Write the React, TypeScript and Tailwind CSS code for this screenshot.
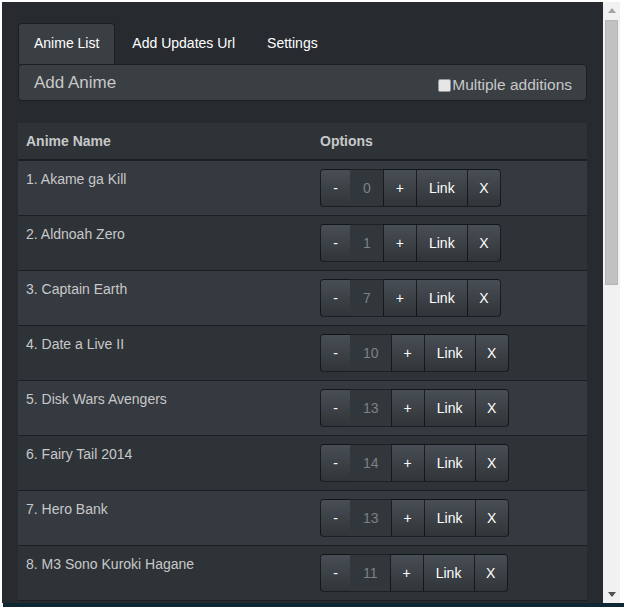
import React from "react"

const animes = [
  { name: "Akame ga Kill", ep: 0 },
  { name: "Aldnoah Zero", ep: 1 },
  { name: "Captain Earth", ep: 7 },
  { name: "Date a Live II", ep: 10 },
  { name: "Disk Wars Avengers", ep: 13 },
  { name: "Fairy Tail 2014", ep: 14 },
  { name: "Hero Bank", ep: 13 },
  { name: "M3 Sono Kuroki Hagane", ep: 11 },
]

const btn =
  "h-[38px] flex items-center justify-center border border-[rgba(0,0,0,0.6)] bg-[linear-gradient(#484e55,#3a3f44_60%,#313539)] text-white text-sm -ml-px"

function Options({ ep }: { ep: number }) {
  return (
    <div className="flex">
      <button className={`${btn} ml-0 w-[31px] rounded-l`}>-</button>
      <span className="h-[38px] flex items-center px-[13px] -ml-px border-y border-[rgba(0,0,0,0.4)] bg-[#32373c] text-[#7a8288] text-sm">
        {ep}
      </span>
      <button className={`${btn} w-[34px]`}>+</button>
      <button className={`${btn} w-[52px]`}>Link</button>
      <button className={`${btn} w-[34px] rounded-r`}>X</button>
    </div>
  )
}

export default function App() {
  const tabs = ["Anime List", "Add Updates Url", "Settings"]

  return (
    <div className="w-[624px] h-[607px] bg-white overflow-hidden font-['Liberation_Sans',Arial,sans-serif]">
      <div className="flex h-[603px] pt-[2px] pl-[2px]">
        {/* popup body */}
        <div className="w-[601px] h-[601px] overflow-hidden bg-[#272b30] px-4 pt-[21px]">
          {/* tabs */}
          <ul className="flex">
            {tabs.map((t, i) => (
              <li
                key={t}
                className={`mr-[2px] px-[15px] h-[41px] flex items-center pb-[2px] text-sm text-white rounded-t ${
                  i === 0 ? "bg-[#3a3f44] border border-b-0 border-[#1c1e22]" : ""
                }`}
              >
                {t}
              </li>
            ))}
          </ul>

          {/* add anime bar */}
          <div className="h-[37px] flex items-center justify-between bg-[#3a3f44] border border-[#1c1e22] rounded pl-[15px] pr-[14px]">
            <span className="text-[17px] text-[#c8c8c8] mt-px">Add Anime</span>
            <label className="flex items-center text-[15.5px] text-[#c8c8c8] mt-[5px]">
              <span className="w-[13px] h-[13px] bg-[#e6e6e6] border border-[#999] rounded-[2px] mr-px" />
              Multiple additions
            </label>
          </div>

          {/* table */}
          <table className="mt-[22px] w-[569px] border-collapse text-sm text-[#c8c8c8]">
            <thead>
              <tr className="h-[37px] bg-[#2e3338] border-b-2 border-[#1c1e22]">
                <th className="w-[294px] px-2 text-left font-bold">Anime Name</th>
                <th className="px-2 text-left font-bold">Options</th>
              </tr>
            </thead>
            <tbody>
              {animes.map((a, i) => (
                <tr
                  key={a.name}
                  className={`border-b border-[#1c1e22] ${i % 2 === 0 ? "bg-[#353a41]" : "bg-[#2e3338]"}`}
                >
                  <td className="px-2 pt-2 align-top leading-5">
                    {i + 1}. {a.name}
                  </td>
                  <td className="px-2 py-2">
                    <Options ep={a.ep} />
                  </td>
                </tr>
              ))}
            </tbody>
          </table>
        </div>

        {/* scrollbar */}
        <div className="w-[17px] h-[601px] bg-[#f1f1f1] flex flex-col items-center">
          <div className="h-[17px] flex items-center justify-center">
            <svg width="8" height="5" viewBox="0 0 8 5">
              <path d="M0 5 L4 0 L8 5 Z" fill="#a3a3a3" />
            </svg>
          </div>
          <div className="w-[13px] h-[265px] bg-[#c1c1c1] border border-[#b5b5b5] mt-px" />
          <div className="flex-1" />
          <div className="h-[17px] flex items-center justify-center">
            <svg width="8" height="5" viewBox="0 0 8 5">
              <path d="M0 0 L8 0 L4 5 Z" fill="#505050" />
            </svg>
          </div>
        </div>
      </div>
      <div className="h-[4px] bg-[#0f2633] ml-[3px]" />
    </div>
  )
}
